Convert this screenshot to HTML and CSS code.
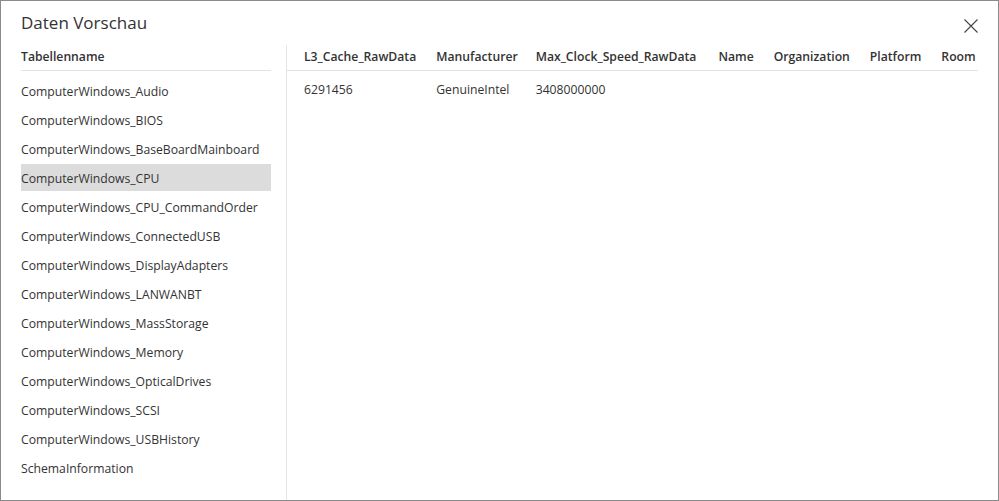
FILE: index.html
```html
<!DOCTYPE html>
<html lang="de">
<head>
  <meta charset="UTF-8">
  <title>Daten Vorschau</title>
  <link rel="stylesheet" href="styles.css">
</head>
<body>
  <div class="dialog">
    <div class="titel-zeile">
      <h1>Daten Vorschau</h1>
      <button class="schliessen" title="Schließen">
        <svg width="14" height="14" viewBox="0 0 14 14">
          <path d="M0.5 0.5 L13.5 13.5 M13.5 0.5 L0.5 13.5" stroke="#444" stroke-width="1.1" fill="none"/>
        </svg>
      </button>
    </div>

    <div class="inhalt">
      <div class="tabellen">
        <div class="kopf">Tabellenname</div>
        <ul class="liste">
          <li>ComputerWindows_Audio</li>
          <li>ComputerWindows_BIOS</li>
          <li>ComputerWindows_BaseBoardMainboard</li>
          <li class="aktiv">ComputerWindows_CPU</li>
          <li>ComputerWindows_CPU_CommandOrder</li>
          <li>ComputerWindows_ConnectedUSB</li>
          <li>ComputerWindows_DisplayAdapters</li>
          <li>ComputerWindows_LANWANBT</li>
          <li>ComputerWindows_MassStorage</li>
          <li>ComputerWindows_Memory</li>
          <li>ComputerWindows_OpticalDrives</li>
          <li>ComputerWindows_SCSI</li>
          <li>ComputerWindows_USBHistory</li>
          <li>SchemaInformation</li>
        </ul>
      </div>

      <div class="vorschau">
        <table class="daten">
          <thead>
            <tr>
              <th>L3_Cache_RawData</th>
              <th>Manufacturer</th>
              <th>Max_Clock_Speed_RawData</th>
              <th>Name</th>
              <th>Organization</th>
              <th>Platform</th>
              <th>Room</th>
            </tr>
          </thead>
          <tbody>
            <tr>
              <td>6291456</td>
              <td>GenuineIntel</td>
              <td>3408000000</td>
              <td></td>
              <td></td>
              <td></td>
              <td></td>
            </tr>
          </tbody>
        </table>
        <div class="linie-rest"></div>
      </div>
    </div>
  </div>
</body>
</html>
```

FILE: styles.css
```css
html, body {
  margin: 0;
  height: 100%;
}
body {
  background: #fff;
  font-family: "Open Sans", "Noto Sans", sans-serif;
  font-size: 12.2px;
  color: #333;
}

.dialog {
  box-sizing: border-box;
  height: 501px;
  border: 1px solid #8a8a8a;
  display: flex;
  flex-direction: column;
  padding: 0 20px 0 20px;
}

.titel-zeile {
  display: flex;
  align-items: center;
  justify-content: space-between;
  height: 44px;
}
h1 {
  margin: 0;
  font-size: 17px;
  font-weight: 400;
  color: #333;
  padding-bottom: 2px;
}
.schliessen {
  background: none;
  border: none;
  padding: 0;
  width: 14px;
  height: 14px;
  margin-top: 5px;
  cursor: pointer;
}
.schliessen svg {
  display: block;
}

.inhalt {
  flex: 1;
  display: flex;
}

.tabellen {
  width: 250px;
  padding-right: 15px;
  border-right: 1px solid #e6e6e6;
}
.kopf {
  height: 25px;
  line-height: 23px;
  font-weight: 600;
  border-bottom: 1px solid #e3e3e3;
  margin-bottom: 6px;
}
.liste {
  list-style: none;
  margin: 0;
  padding: 0;
}
.liste li {
  height: 27px;
  line-height: 29px;
  margin-bottom: 2px;
  white-space: nowrap;
}
.liste li.aktiv {
  background: #dcdcdc;
}

.vorschau {
  flex: 1;
  overflow: hidden;
  position: relative;
}
.daten {
  border-collapse: collapse;
}
.daten th {
  box-sizing: border-box;
  text-align: left;
  font-weight: 600;
  height: 25px;
  line-height: 23px;
  padding: 0 10px;
  vertical-align: top;
  border-bottom: 1px solid #e3e3e3;
  white-space: nowrap;
}
.daten th:first-child,
.daten td:first-child {
  padding-left: 17px;
}
.daten th:nth-child(2) {
  padding-right: 8px;
}
.daten th:nth-child(3) {
  padding-right: 12px;
}
.daten th:last-child {
  padding-right: 3px;
}
.daten td {
  height: 34px;
  padding: 2px 10px 0 10px;
  white-space: nowrap;
}
.linie-rest {
  position: absolute;
  top: 25px;
  left: 0;
  right: 0;
  border-top: 1px solid #e3e3e3;
  z-index: -1;
}
```
